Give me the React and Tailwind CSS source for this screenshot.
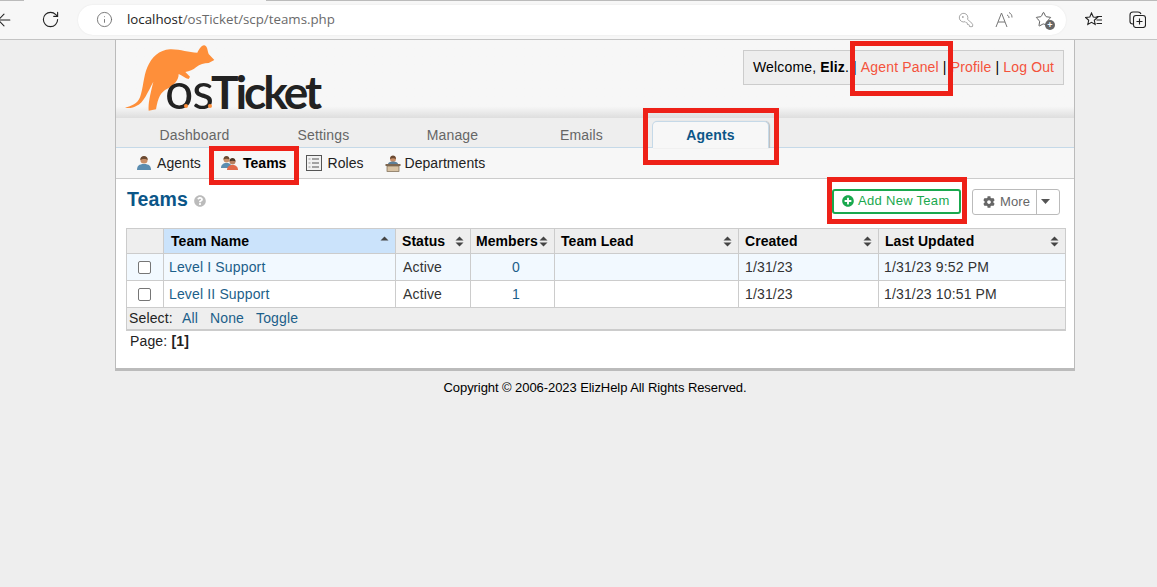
import { ArrowLeft, RotateCw, Info, KeyRound, Star } from 'lucide-react'
import { FaPlusCircle, FaCog, FaQuestionCircle } from 'react-icons/fa'

const font = "font-['Liberation_Sans',Arial,sans-serif]"

const tabs = ['Dashboard', 'Settings', 'Manage', 'Emails']

function PersonIcon({ shirt = '#5b8db0' }) {
  return (
    <svg width="16" height="16" viewBox="0 0 16 16">
      <path d="M1 15c0-4 2-6 7-6s7 2 7 6z" fill={shirt} />
      <circle cx="8" cy="5" r="3.6" fill="#c98f68" />
      <path d="M4.3 5c0-3 1.6-4 3.7-4s3.7 1 3.7 4C10.500 3.500 6 3.500 4.300 5z" fill="#6b4a32" />
    </svg>
  )
}

function TeamIcon() {
  return (
    <svg width="17" height="16" viewBox="0 0 17 16">
      <path d="M0 13c0-3 2-5 5.500-5S11 10 11 13z" fill="#5b8db0" />
      <circle cx="5.500" cy="4.500" r="3" fill="#c98f68" />
      <path d="M2.500 4.500C2.500 2 4 1 5.500 1s3 1 3 3.500C7 3.500 4 3.500 2.500 4.500z" fill="#6b4a32" />
      <path d="M6 15c0-3 2-5 5.500-5s5.500 2 5.500 5z" fill="#e2694a" />
      <circle cx="11.500" cy="6.500" r="3" fill="#b98060" />
      <path d="M8.500 6.500c0-2.500 1.500-3.500 3-3.500s3 1 3 3.500c-1.500-1-4.500-1-6 0z" fill="#4b3626" />
    </svg>
  )
}

function RolesIcon() {
  return (
    <svg width="16" height="16" viewBox="0 0 16 16" fill="none">
      <rect x="0.500" y="0.500" width="15" height="15" fill="#f2f2f2" stroke="#555" />
      <path d="M6 4h7M6 8h7M6 12h7" stroke="#555" />
      <path d="M2.500 4h2M2.500 8h2M2.500 12h2" stroke="#999" />
    </svg>
  )
}

function DeptIcon() {
  return (
    <svg width="16" height="17" viewBox="0 0 16 17">
      <circle cx="8" cy="4" r="3" fill="#c98f68" />
      <path d="M5 4c0-2.500 1.500-3.500 3-3.500s3 1 3 3.500C9.500 3 6.500 3 5 4z" fill="#6b4a32" />
      <path d="M3 9c0-1.500 2-2.500 5-2.500s5 1 5 2.500z" fill="#5b7f99" />
      <rect x="0.500" y="9" width="15" height="2" fill="#7d6650" />
      <rect x="2" y="11" width="12" height="5.500" fill="#d8c2a3" stroke="#77664f" strokeWidth="0.700" />
    </svg>
  )
}

function SortIcon({ up = true, down = true }) {
  return (
    <svg width="9" height="11" viewBox="0 0 9 11" fill="#444" className="shrink-0">
      {up && <path d="M4.500 0.500 8.500 4.500H0.500z" />}
      {down && <path d="M0.500 6.500H8.500L4.500 10.500z" />}
    </svg>
  )
}

function Logo() {
  return (
    <div className="relative w-[210px] h-[75px]">
      <svg width="210" height="75" viewBox="0 0 630 225" className="absolute left-0 top-0">
        <path
          fill="#fe8f3a"
          d="M15 203C35 198 52 192 60 172C70 145 70 110 82 82C94 52 118 30 150 28C180 27 205 38 232 38C238 28 244 15 253 16C263 18 262 32 266 42L283 60L266 69C252 70 240 72 228 82C220 90 208 93 196 96L210 110L206 117C196 116 186 106 176 102C176 122 160 138 142 146C122 156 114 172 108 208L86 212C84 190 90 166 100 125C84 155 70 190 50 197C40 204 26 206 15 203z"
        />
      </svg>
      <div className="absolute left-[45px] top-[22px] flex items-baseline font-['Lato',sans-serif] text-[#222] leading-[56px] tracking-normal">
        <span className="text-[50px] font-normal tracking-[-1px]">os</span>
        <span className="ml-[-2px] text-[46px] font-bold tracking-[-3px]">Ticket</span>
      </div>
      <div className="absolute left-[64px] top-[64px] w-[4px] h-[4px] rounded-full bg-[#fe8f3a]" />
      <div className="absolute left-[88px] top-[64px] w-[4px] h-[4px] rounded-full bg-[#fe8f3a]" />
    </div>
  )
}

function Th({ children, className = '', up, down }) {
  return (
    <th className={`border border-[#ccc] px-[6px] text-left font-bold text-[14px] text-black tracking-[0.050px] ${className}`}>
      <div className="flex items-center justify-between">
        <span>{children}</span>
        <SortIcon up={up} down={down} />
      </div>
    </th>
  )
}

function Row({ name, members, updated, shaded }) {
  const td = 'border border-[#ccc]'
  return (
    <tr className={`h-[27px] ${shaded ? 'bg-[#f2f9ff]' : 'bg-white'}`}>
      <td className={`${td} pl-[11px]`}>
        <div className="w-[13px] h-[13px] rounded-[2px] border border-[#767676] bg-white" />
      </td>
      <td className={`${td} text-[#1c5f8a] px-[5px]`}>{name}</td>
      <td className={`${td} text-[#333] px-[7px]`}>Active</td>
      <td className={`${td} text-center text-[#1c5f8a] pl-[7px]`}>{members}</td>
      <td className={td} />
      <td className={`${td} text-[#333] px-[6px]`}>1/31/23</td>
      <td className={`${td} text-[#333] px-[5px]`}>{updated}</td>
    </tr>
  )
}

export default function App() {
  return (
    <div className={`relative w-[1157px] h-[587px] overflow-hidden bg-[#eee] tracking-[0.150px] ${font}`}>
      {/* browser chrome */}
      <div className="h-[40px] bg-[#f7f7f7] border-b border-[#c4c4c4] flex items-center relative">
        <div className="absolute left-0 top-0 w-[24px] h-px bg-[#bbb]" />
        <div className="absolute left-[266px] right-0 top-0 h-px bg-[#bbb]" />
        <ArrowLeft size={20} strokeWidth={1.300} className="ml-[-6px] text-[#222]" />
        <RotateCw size={19} strokeWidth={1.400} className="ml-[27px] text-[#222]" />
        <div className="ml-[18px] w-[988px] h-[30px] rounded-full bg-white flex items-center shadow-[0_0_2px_rgba(0,0,0,0.08)]">
          <Info size={17} strokeWidth={1.200} className="ml-[18px] text-[#666]" />
          <div className="ml-[14px] mt-[1px] font-['Open_Sans',sans-serif] text-[13.300px] tracking-normal text-[#6a6a6a]">
            <span className="text-[#222]">localhost</span>/osTicket/scp/teams.php
          </div>
          <div className="ml-auto mr-[14px] flex items-center gap-[21px] text-[#888]">
            <KeyRound size={16} strokeWidth={1.100} className="-scale-x-100" />
            <svg width="19" height="17" viewBox="0 0 19 17" fill="none" stroke="#777" strokeWidth="1">
              <path d="M1 16 6.500 2 12 16M3 11h7" />
              <path d="M12 4c1.500.5 2 1.500 2 3M14 1.500c2 1 3 2.500 3 5" />
            </svg>
            <div className="relative">
              <Star size={17} strokeWidth={1.200} className="text-[#444]" />
              <div className="absolute right-[-3px] bottom-[-2px] w-[10px] h-[10px] rounded-full bg-[#666] text-white text-[9px] leading-[10px] text-center font-bold">+</div>
            </div>
          </div>
        </div>
        <svg width="18" height="16" viewBox="0 0 18 16" fill="none" stroke="#222" strokeWidth="1.100" className="ml-[19px]">
          <path d="M6.500 1 8.300 5l4.200.5-3.200 2.800.9 4.200-3.700-2.200L2.800 12.500l.9-4.200L.6 5.500 4.800 5z" />
          <path d="M11.500 4.500H17M11.500 8H17M11.500 11.500H17" />
        </svg>
        <svg width="17" height="17" viewBox="0 0 17 17" fill="none" stroke="#222" strokeWidth="1.100" className="ml-[26px]">
          <path d="M4 13C2 13 1 12 1 10.500V4C1 2 2 1 4 1h5c1.500 0 2.500.6 3 2" />
          <rect x="4.500" y="4.500" width="12" height="12" rx="2.500" />
          <path d="M10.500 7.500v6M7.500 10.500h6" />
        </svg>
      </div>

      {/* page */}
      <div className="ml-[115px] w-[960px] h-[331px] bg-white border-x border-[#bbb] border-b-[3px] border-b-[#bbb]">
        <div className="h-[78px] flex justify-between bg-gradient-to-b from-[#f7f7f7] from-85% to-[#dedede]">
          <div className="pl-[4px]">
            <Logo />
          </div>
          <div className="mt-[10px] mr-[10px] h-[35px] w-[321px] border border-[#ccc] bg-[#eee] flex items-center pl-[9px] text-[14px] text-[#000] whitespace-pre">
            <span>Welcome, </span>
            <strong>Eliz</strong>
            <span>. | </span>
            <span className="text-[#f4533c]">Agent Panel</span>
            <span> | </span>
            <span className="text-[#f4533c]">Profile</span>
            <span> | </span>
            <span className="text-[#f4533c]">Log Out</span>
          </div>
        </div>

        <div className="h-[30px] bg-[#eee] border-b border-[#c5d9e8] flex pl-[14px] text-[14px] text-[#666]">
          {tabs.map(t => (
            <div key={t} className="w-[129px] flex items-center justify-center pt-[6px]">{t}</div>
          ))}
          <div className="ml-[6px] mt-[3px] w-[117px] h-[27px] bg-[#f7f7f7] rounded-t-[5px] border-x border-t border-[#c5d9e8] shadow-[1px_0_1px_#bbb] flex items-center justify-center font-bold text-[#0b5688]">
            Agents
          </div>
        </div>

        <div className="h-[31px] bg-[#f7f7f7] border-b border-[#ccc] flex items-center text-[14px] text-[#222] tracking-[0.050px]">
          <div className="ml-[20px] flex items-center gap-[5px]"><PersonIcon />Agents</div>
          <div className="ml-[20px] flex items-center gap-[5px] font-bold text-black"><TeamIcon />Teams</div>
          <div className="ml-[20px] flex items-center gap-[5px]"><RolesIcon />Roles</div>
          <div className="ml-[21px] flex items-center gap-[4px]"><DeptIcon />Departments</div>
        </div>

        <div className="pl-[10px]">
          <div className="h-[49px] mr-[14px] flex items-center">
            <h2 className="ml-[1px] text-[19.500px] font-bold text-[#0b5688] mt-[-7px]">Teams</h2>
            <FaQuestionCircle size={12} className="ml-[6px] mt-[-5px] text-[#bbb]" />
            <div className="ml-auto mt-[-5px] w-[129px] h-[25px] rounded-[3px] border-2 border-[#19a84e] flex items-center pl-[8px] gap-[4px] text-[13px] text-[#19a84e] tracking-[0.300px]">
              <FaPlusCircle size={12} />
              Add New Team
            </div>
            <div className="ml-[11px] mt-[-4px] w-[88px] h-[26px] rounded-[3px] border border-[#bbb] flex items-center text-[13px] text-[#666]">
              <div className="flex-1 flex items-center pl-[10px] gap-[5px] border-r border-[#bbb] h-full">
                <FaCog size={12} />
                More
              </div>
              <div className="w-[22px] pr-[5px] flex items-center justify-center">
                <svg width="9" height="5" viewBox="0 0 9 5" fill="#555"><path d="M0 0h9L4.500 5z" /></svg>
              </div>
            </div>
          </div>

          <table className="w-[939px] table-fixed border-collapse text-[14px]">
            <colgroup>
              <col className="w-[37px]" />
              <col className="w-[232px]" />
              <col className="w-[75px]" />
              <col className="w-[84px]" />
              <col className="w-[184px]" />
              <col className="w-[140px]" />
              <col className="w-[187px]" />
            </colgroup>
            <thead>
              <tr className="h-[25px] bg-[#eee]">
                <th className="border border-[#ccc]" />
                <Th className="bg-[#cbe3fb] !pl-[7px]" down={false}>Team Name</Th>
                <Th>Status</Th>
                <th className="border border-[#ccc] pl-[5px] pr-[6px] text-left font-bold text-[14px] text-black tracking-[0.050px]">
                  <div className="flex items-center justify-between"><span>Members</span><SortIcon /></div>
                </th>
                <Th>Team Lead</Th>
                <Th>Created</Th>
                <Th>Last Updated</Th>
              </tr>
            </thead>
            <tbody>
              <Row name="Level I Support" members="0" updated="1/31/23 9:52 PM" shaded />
              <Row name="Level II Support" members="1" updated="1/31/23 10:51 PM" />
              <tr className="h-[21px] bg-[#eee]">
                <td colSpan={7} className="border border-[#ccc] border-b-2 px-[2px] text-[#222] whitespace-pre">
                  Select:  <span className="text-[#1c5f8a] ml-[1px]">All</span>
                  <span className="text-[#1c5f8a] ml-[12px]">None</span>
                  <span className="text-[#1c5f8a] ml-[12px]">Toggle</span>
                </td>
              </tr>
            </tbody>
          </table>

          <div className="pl-[4px] text-[14px] text-[#222]">Page: <strong>[1]</strong></div>
        </div>
      </div>

      <p className="mt-[7px] ml-[115px] w-[960px] text-center text-[13px] tracking-[-0.070px] text-[#000]">
        Copyright © 2006-2023 ElizHelp All Rights Reserved.
      </p>

      {/* red annotation boxes drawn over the screenshot */}
      <div className="absolute left-[850px] top-[41px] w-[103px] h-[55px] border-[5px] border-[#ee2118]" />
      <div className="absolute left-[643px] top-[108px] w-[136px] h-[57px] border-[5px] border-[#ee2118]" />
      <div className="absolute left-[209px] top-[146px] w-[90px] h-[39px] border-[5px] border-[#ee2118]" />
      <div className="absolute left-[827px] top-[177px] w-[140px] h-[47px] border-[5px] border-[#ee2118]" />
    </div>
  )
}
